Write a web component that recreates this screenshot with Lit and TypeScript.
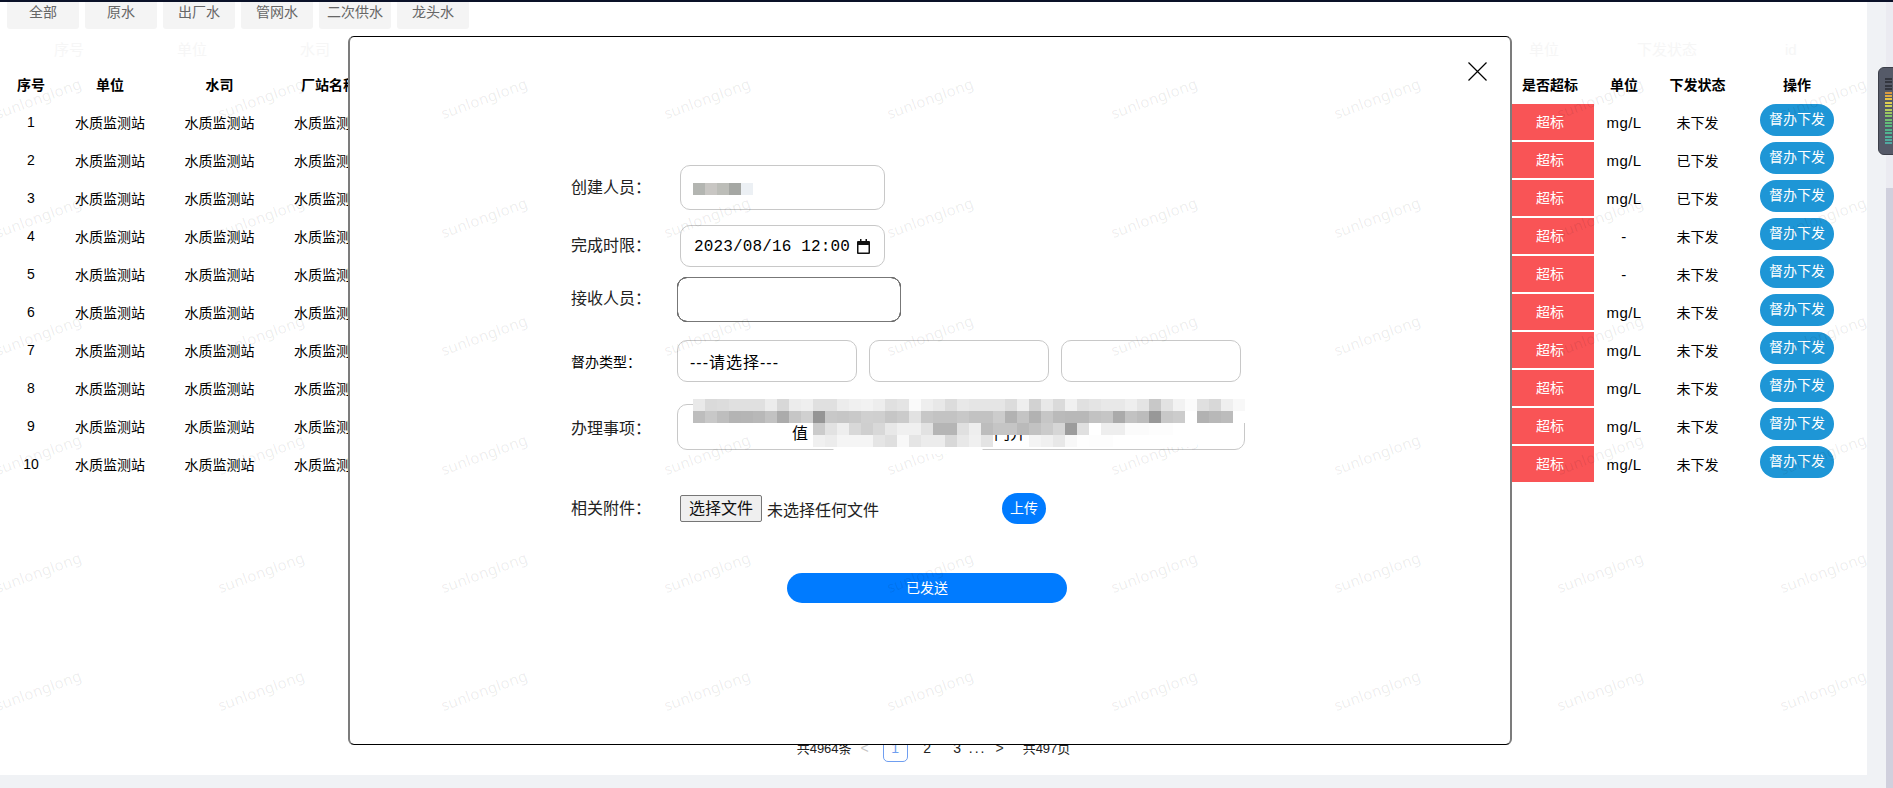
import { LitElement, html, css } from "lit";
import { customElement } from "lit/decorators.js";

const TABS = ["全部", "原水", "出厂水", "管网水", "二次供水", "龙头水"];
const STATUS = ["未下发", "已下发", "已下发", "未下发", "未下发", "未下发", "未下发", "未下发", "未下发", "未下发"];
const UNITS = ["mg/L", "mg/L", "mg/L", "-", "-", "mg/L", "mg/L", "mg/L", "mg/L", "mg/L"];

const MOSAIC = [
  "e9 da dc e0 e0 e0 ec d8 ec ef e0 e0 ec f0 f2 ed e0 e4 fa ee e8 dc e8 e5 e5 e5 dc ee d2 e8 da f0 e0 e4 e8 e8 ee e4 c8 e2 f2 fb e0 d8 ef f8",
  "bd c8 be b4 b5 b8 c2 ab c6 d0 95 c8 c6 c9 d0 cf c6 cb e2 c7 c3 c3 c8 c2 c2 cc b2 c4 b2 c6 ba b8 b8 c2 c5 aa c2 bc 98 c8 cc ff b2 b8 bc ff",
  "-- -- -- -- -- -- -- -- -- -- cb e2 ee d8 cf d8 e8 f0 f0 e2 b5 b5 e0 ee bd c5 c5 ba c2 cb d6 9c e0 ff ee ee fb fb fd fd ff ff -- -- -- --",
  "-- -- -- -- -- -- -- -- -- -- f0 ec f5 f5 f5 e5 df f8 e5 ec ec d8 e8 f0 e4 -- -- -- f4 f0 e8 f8 fe fd fd ff ff ff ff ff ff ff -- -- -- --",
].map((r) => r.split(" "));

const NAME_MOSAIC = ["#b3b5b1", "#c8c6c3", "#bcbdb8", "#a5a7a3", "#ecf0f4"];

const LEDS = [
  "#33363f", "#33363f", "#33363f", "#33363f", "#d99a3f", "#e0ac40", "#e6c448", "#e0cf50", "#ccd055", "#b4cc5c",
  "#9cc860", "#84c468", "#72c070", "#62bc78", "#58b880", "#50b488", "#50b490", "#50b098", "#50ac9c", "#50a8a0",
];

const WM_X = Array.from({ length: 9 }, (_, i) => 37.6 + 223.2 * i);
const WM_Y = [98.4, 216.8, 335.2, 453.6, 572, 690.4];

@customElement("app-root")
export class AppRoot extends LitElement {
  static styles = css`
    :host {
      display: block;
      position: relative;
      width: 1893px;
      height: 788px;
      overflow: hidden;
      background: #f0f2f5;
      font-family: "Liberation Sans", "Noto Sans CJK SC", sans-serif;
      font-size: 14px;
      color: #000;
    }
    .topbar { height: 2px; background: #0a1128; }
    .body { display: flex; height: 786px; }
    .content {
      width: 1867px;
      height: 773px;
      background: #fff;
      display: flex;
      flex-direction: column;
    }
    .gutter { flex: 1; display: flex; justify-content: flex-end; }
    .scroll { width: 7px; background: #ebebf1; padding-top: 186px; box-sizing: border-box; height: 786px; }
    .thumb { height: 600px; background: #d0d0dd; }

    .tabs { display: flex; gap: 6px; padding-left: 7px; }
    .tab {
      width: 72px;
      height: 27px;
      box-sizing: border-box;
      padding-top: 1px;
      line-height: 18px;
      text-align: center;
      background: #f4f4f4;
      color: #666;
      border-radius: 0 0 3px 3px;
    }

    .ghost {
      display: flex;
      height: 22px;
      margin-top: 10px;
      line-height: 22px;
      font-size: 15px;
      color: #f6f6f6;
      padding-left: 54px;
    }
    .ghost span { width: 123px; }
    .ghost .fill { flex: 1; width: auto; }
    .ghost .g1 { width: 108px; }
    .ghost .g2 { width: 148px; }
    .ghost .g3 { width: 82px; }

    .row {
      display: grid;
      grid-template-columns: 48px 110px 109px 110px 1fr 88px 60px 87px 112px;
      padding: 0 14px 0 7px;
      text-align: center;
      align-items: center;
    }
    .head { font-weight: 700; height: 22px; margin-top: 13px; margin-bottom: 8px; line-height: 22px; }
    .rows { display: flex; flex-direction: column; gap: 2px; }
    .rows .row { height: 36px; }
    .over {
      background: #f95456;
      color: #fff;
      height: 36px;
      line-height: 36px;
    }
    .unit { font-size: 15px; letter-spacing: 0.4px; }
    .act {
      justify-self: center;
      align-self: start;
      width: 74px;
      height: 32px;
      line-height: 31px;
      border-radius: 16px;
      background: #1e96d6;
      color: #fff;
    }

    .pager {
      margin-top: auto;
      height: 40px;
      display: flex;
      justify-content: center;
      align-items: center;
      box-sizing: border-box;
      padding-bottom: 13px;
      color: #222;
      line-height: 27px;
    }
    .pager .total { font-size: 13px; }
    .pager .muted { color: #c4c4c4; margin: 0 14px 0 9px; }
    .pager .page { width: 25px; height: 27px; text-align: center; margin-right: 5px; box-sizing: border-box; }
    .pager .cur { border: 1px solid #6f9ef0; border-radius: 5px; color: #6f9ef0; line-height: 25px; margin-right: 7px; }
    .pager .dots { margin: 0 9px 0 -6px; letter-spacing: 2px; }
    .pager .next { color: #333; margin-right: 19px; }

    .modal {
      position: absolute;
      left: 348px;
      top: 36px;
      width: 1164px;
      height: 709px;
      box-sizing: border-box;
      background: #fff;
      border-top: 1px solid #000;
      border-bottom: 1px solid #000;
      border-left: 2px solid #7c7c7c;
      border-right: 2px solid #7c7c7c;
      border-radius: 6px;
    }
    .mhead { display: flex; justify-content: flex-end; padding: 25px 23px 0 0; height: 19px; }
    .close { width: 19px; height: 19px; display: block; }
    .form { padding: 84px 0 0 221px; display: flex; flex-direction: column; position: relative; }
    .line { display: flex; align-items: center; }
    .label { width: 106px; font-size: 16px; color: #222; margin-bottom: 2px; }
    .label.small { font-size: 14px; color: #000; margin-bottom: 0; }
    .label.up3 { margin-bottom: 5px; }
    .label.up2 { margin-bottom: 4px; }
    .label.flat { margin-bottom: 0; }
    .field {
      box-sizing: border-box;
      border: 1px solid #c8c8c8;
      border-radius: 10px;
      background: #fff;
      display: flex;
      align-items: center;
      font-size: 16px;
    }
    .l1 .field { width: 205px; height: 45px; margin-left: 3px; }
    .l2 { margin-top: 15px; }
    .l2 .field { width: 205px; height: 42px; margin-left: 3px; padding: 0 14px 0 13px; justify-content: space-between; }
    .date { font-family: "Liberation Mono", monospace; font-size: 16px; letter-spacing: 0.15px; white-space: pre; padding-top: 1px; }
    .cal { width: 13px; height: 15px; display: block; }
    .l3 { margin-top: 10px; }
    .l3 .field { width: 224px; height: 45px; border: 1px solid #000; outline: 1px solid #777; outline-offset: -1px; }
    .l4 { margin-top: 18px; }
    .selects { display: flex; gap: 12px; }
    .selects .field { width: 180px; height: 42px; padding-left: 12px; }
    .pick { letter-spacing: 1px; }
    .l5 { margin-top: 22px; }
    .l5 .field { width: 568px; height: 46px; position: relative; align-items: flex-start; line-height: 24px; padding-top: 17px; }
    .frag1 { margin-left: 114px; }
    .frag2 { margin-left: 186px; font-size: 16px; }
    .l6 { margin-top: 43px; }
    .filebtn {
      width: 82px;
      height: 27px;
      box-sizing: border-box;
      margin-left: 3px;
      border: 1px solid #767676;
      border-radius: 2px;
      background: #efefef;
      font-size: 16px;
      line-height: 25px;
      text-align: center;
      color: #111;
    }
    .nofile { width: 240px; box-sizing: border-box; padding-left: 5px; font-size: 16px; color: #222; }
    .upload {
      width: 44px;
      height: 31px;
      line-height: 31px;
      text-align: center;
      color: #fff;
      background: #007bff;
      border-radius: 16px;
    }
    .send {
      margin: 49px 0 0 216px;
      width: 280px;
      height: 30px;
      line-height: 30px;
      text-align: center;
      color: #fff;
      background: #007bff;
      border-radius: 15px;
    }

    .blur { position: absolute; display: grid; }
    .blur i { display: block; }
    .blur-main {
      left: 693px;
      top: 399px;
      grid-template-columns: repeat(46, 12px);
      grid-auto-rows: 12px;
    }
    .patch { position: absolute; background: #fff; }
    .p1 { left: 693px; top: 397px; width: 120px; height: 5px; }
    .p2 { left: 833px; top: 447px; width: 150px; height: 7px; border-radius: 0 0 12px 12px; }
    .p3 { left: 813px; top: 395px; width: 434px; height: 4px; }
    .blur-name { left: 693px; top: 183px; grid-template-columns: repeat(5, 12px); grid-auto-rows: 12px; }

    .marks { position: absolute; inset: 0; pointer-events: none; }
    .mark {
      position: absolute;
      transform: translate(-50%, -50%) rotate(-20deg);
      font-family: "Noto Sans", sans-serif;
      font-size: 15px;
      letter-spacing: 0.2px;
      color: rgba(0, 0, 0, 0.08);
      white-space: nowrap;
    }

    .meter {
      position: absolute;
      left: 1878px;
      top: 67px;
      width: 24px;
      height: 88px;
      box-sizing: border-box;
      padding: 10px 0 0 6px;
      background: #555a68;
      border: 1px solid #3c3f49;
      border-radius: 6px;
      display: flex;
      flex-direction: column;
      gap: 1.4px;
    }
    .meter i { display: block; width: 7px; height: 2px; }
  `;

  render() {
    return html`
      <div class="topbar"></div>
      <div class="body">
        <div class="content">
          <div class="tabs">${TABS.map((t) => html`<div class="tab">${t}</div>`)}</div>
          <div class="ghost">
            <span>序号</span><span>单位</span><span>水司</span><span class="fill"></span>
            <span class="g1">单位</span><span class="g2">下发状态</span><span class="g3">id</span>
          </div>
          <div class="row head">
            <div>序号</div><div>单位</div><div>水司</div><div>厂站名称</div><div></div>
            <div>是否超标</div><div>单位</div><div>下发状态</div><div>操作</div>
          </div>
          <div class="rows">
            ${STATUS.map(
              (s, i) => html`
                <div class="row">
                  <div>${i + 1}</div><div>水质监测站</div><div>水质监测站</div><div>水质监测站</div><div></div>
                  <div class="over">超标</div><div class="unit">${UNITS[i]}</div><div>${s}</div>
                  <div class="act">督办下发</div>
                </div>
              `
            )}
          </div>
          <div class="pager">
            <span class="total">共4964条</span>
            <span class="muted">&lt;</span>
            <span class="page cur">1</span>
            <span class="page">2</span>
            <span class="page">3</span>
            <span class="dots">...</span>
            <span class="next">&gt;</span>
            <span class="total">共497页</span>
          </div>
        </div>
        <div class="gutter"><div class="scroll"><div class="thumb"></div></div></div>
      </div>

      <div class="modal">
        <div class="mhead">
          <svg class="close" viewBox="0 0 19 19" fill="none" stroke="#000" stroke-width="1.2">
            <path d="M0.5 0.5L18.5 18.5M18.5 0.5L0.5 18.5" />
          </svg>
        </div>
        <div class="form">
          <div class="line l1"><div class="label up2">创建人员：</div><div class="field"></div></div>
          <div class="line l2">
            <div class="label up2">完成时限：</div>
            <div class="field">
              <span class="date">2023/08/16 12:00</span>
              <svg class="cal" viewBox="0 0 13 15">
                <path d="M3 0h1.5v2h4V0H10v2h2a1 1 0 0 1 1 1v11a1 1 0 0 1-1 1H1a1 1 0 0 1-1-1V3a1 1 0 0 1 1-1h2z M1.5 6v7.5h10V6z" fill="#111" fill-rule="evenodd" />
              </svg>
            </div>
          </div>
          <div class="line l3"><div class="label up3">接收人员：</div><div class="field"></div></div>
          <div class="line l4">
            <div class="label small">督办类型：</div>
            <div class="selects">
              <div class="field"><span class="pick">---请选择---</span></div>
              <div class="field"></div>
              <div class="field"></div>
            </div>
          </div>
          <div class="line l5">
            <div class="label flat">办理事项：</div>
            <div class="field"><span class="frag1">值</span><span class="frag2">门并</span></div>
          </div>
          <div class="line l6">
            <div class="label up2">相关附件：</div>
            <div class="filebtn">选择文件</div>
            <div class="nofile">未选择任何文件</div>
            <div class="upload">上传</div>
          </div>
          <div class="send">已发送</div>
        </div>
      </div>

      <div class="marks">
        ${WM_Y.map((y) =>
          WM_X.map((x) => html`<span class="mark" style="left:${x}px;top:${y}px">sunlonglong</span>`)
        )}
      </div>

      <div class="patch p1"></div>
      <div class="patch p2"></div>
      <div class="patch p3"></div>
      <div class="blur blur-name">
        ${NAME_MOSAIC.map((c) => html`<i style="background:${c}"></i>`)}
      </div>
      <div class="blur blur-main">
        ${MOSAIC.map((r) =>
          r.map((c) => html`<i style="background:${c === "--" ? "transparent" : "#" + c + c + c}"></i>`)
        )}
      </div>

      <div class="meter">
        ${LEDS.map((c) => html`<i style="background:${c}"></i>`)}
      </div>
    `;
  }
}
